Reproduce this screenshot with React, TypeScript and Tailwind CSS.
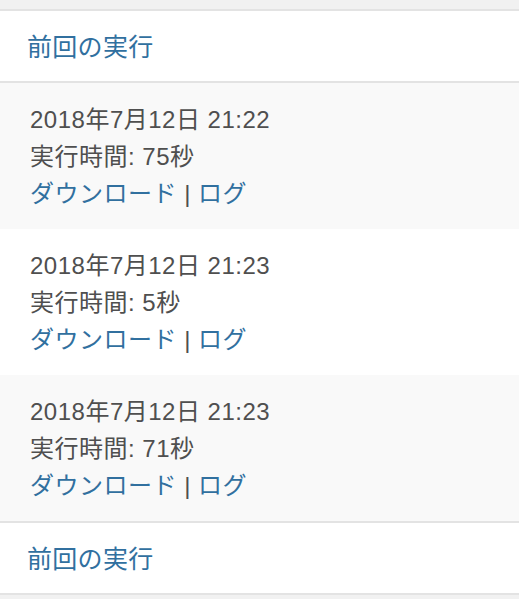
const runs = [
  { date: '2018年7月12日 21:22', time: '75秒' },
  { date: '2018年7月12日 21:23', time: '5秒' },
  { date: '2018年7月12日 21:23', time: '71秒' },
];

const font = {
  fontFamily: '"Liberation Sans", "Noto Sans CJK JP", sans-serif',
};

function SectionHeader() {
  return (
    <div className="flex h-[74px] items-center border-y-2 border-[#e3e3e3] bg-white px-[27px] pt-[3px]">
      <a href="#" className="text-[25px] leading-none tracking-[0.3px] text-[#31709f]">
        前回の実行
      </a>
    </div>
  );
}

export default function App() {
  return (
    <div className="min-h-[599px] w-[519px] bg-[#f1f1f1] pt-[9px]" style={font}>
      <SectionHeader />
      {runs.map((run, i) => (
        <div
          key={i}
          className={`flex h-[146px] flex-col justify-center px-[30px] text-[24px] leading-[37px] tracking-[0.5px] text-[#4f4f4f] ${
            i % 2 === 0 ? 'bg-[#f9f9f9]' : 'bg-white'
          }`}
        >
          <div>{run.date}</div>
          <div>実行時間: {run.time}</div>
          <div>
            <a href="#" className="text-[#31709f]">ダウンロード</a>
            <span> | </span>
            <a href="#" className="text-[#31709f]">ログ</a>
          </div>
        </div>
      ))}
      <SectionHeader />
    </div>
  );
}
